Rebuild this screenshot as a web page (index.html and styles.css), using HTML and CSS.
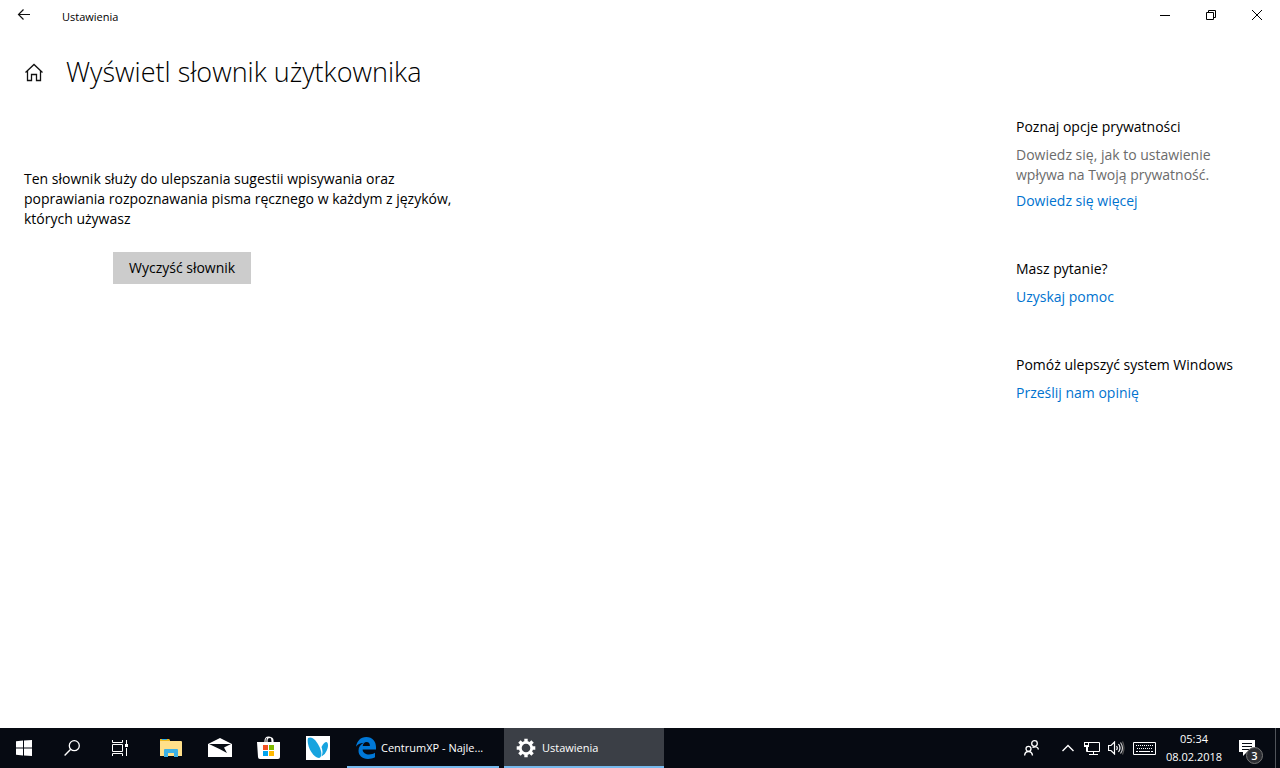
FILE: index.html
```html
<!DOCTYPE html>
<html lang="pl">
<head>
<meta charset="utf-8">
<title>Ustawienia</title>
<link rel="stylesheet" href="styles.css">
</head>
<body>
<div class="window">
  <header class="titlebar">
    <button class="back" aria-label="Wstecz"><svg width="14" height="12" viewBox="0 0 14 12"><path d="M13 5.500H1.500M6.500 .5l-5 5 5 5" fill="none" stroke="#111" stroke-width="1.200"/></svg></button>
    <span class="app-name">Ustawienia</span>
    <div class="controls">
      <button aria-label="Minimalizuj"><svg width="10" height="10" viewBox="0 0 10 10"><path d="M0 5.500h10" stroke="#000"/></svg></button>
      <button aria-label="Przywróć"><svg width="10" height="10" viewBox="0 0 10 10"><path d="M.5 2.500h7v7h-7zM2.500 2.500v-2h7v7h-2" fill="none" stroke="#000"/></svg></button>
      <button aria-label="Zamknij"><svg width="10" height="10" viewBox="0 0 10 10"><path d="M0 0l10 10M10 0L0 10" stroke="#000"/></svg></button>
    </div>
  </header>
  <div class="page-head">
    <a class="home" href="#home" aria-label="Strona główna"><svg width="20" height="20" viewBox="0 0 20 20"><path d="M1.500 10.500 10 2.500l8.500 8M3.500 9v9.500h4v-6h5v6h4V9" fill="none" stroke="#111" stroke-width="1.300"/></svg></a>
    <h1>Wyświetl słownik użytkownika</h1>
  </div>
  <div class="content">
    <main class="main">
      <p>Ten słownik służy do ulepszania sugestii wpisywania oraz poprawiania rozpoznawania pisma ręcznego w każdym z języków, których używasz</p>
      <button class="clear">Wyczyść słownik</button>
    </main>
    <aside class="side">
      <section>
        <h2>Poznaj opcje prywatności</h2>
        <p>Dowiedz się, jak to ustawienie wpływa na Twoją prywatność.</p>
        <a href="#privacy">Dowiedz się więcej</a>
      </section>
      <section>
        <h2>Masz pytanie?</h2>
        <a href="#help">Uzyskaj pomoc</a>
      </section>
      <section>
        <h2>Pomóż ulepszyć system Windows</h2>
        <a href="#feedback">Prześlij nam opinię</a>
      </section>
    </aside>
  </div>
</div>
<footer class="taskbar">
  <button class="launch" aria-label="Start"><svg width="16" height="16" viewBox="0 0 16 16"><path d="M0 1.300 7 .6V7.500H0zM8 .5 16 0v7.500H8zM0 8.500h7v7L0 14.700zM8 8.500h8V16l-8-.5z" fill="#fff"/></svg></button>
  <button class="launch" aria-label="Szukaj"><svg width="16" height="16" viewBox="0 0 16 16"><circle cx="10.300" cy="5.700" r="5" fill="none" stroke="#fff" stroke-width="1.300"/><path d="M6.700 9.300.6 15.400" stroke="#fff" stroke-width="1.400"/></svg></button>
  <button class="launch" aria-label="Widok zadań"><svg width="16" height="16" viewBox="0 0 16 16"><path d="M.5 0v2.500h10V0M.5 16v-2.500h10V16M.5 4.500h10v7H.5zM14.500 0v4M14.500 8v8" fill="none" stroke="#fff"/><path d="M13 4h3v3h-3z" fill="#fff"/></svg></button>
  <button class="launch wide" aria-label="Eksplorator plików"><svg width="22" height="20" viewBox="0 0 22 20"><path d="M0 2q0-1 1-1h8l1 2h11q1 0 1 1v14H0z" fill="#ffe08a"/><path d="M0 2q0-1 1-1h8l1 2H0z" fill="#edb91d"/><path d="M2 1h5v1H2z" fill="#35aee6"/><path d="M4 19v-7q0-1 1-1h12q1 0 1 1v7h-4v-4H8v4z" fill="#3db1e5"/></svg></button>
  <button class="launch wide" aria-label="Poczta"><svg width="24" height="20" viewBox="0 0 24 20"><path d="M0 6 12 0l12 6v13H0z" fill="#fff"/><path d="M1 6h22l-7 3.500 3 5.500-7.500-4z" fill="#080d14"/></svg></button>
  <button class="launch wide" aria-label="Sklep"><svg width="24" height="24" viewBox="0 0 24 24"><path d="M8 7V5q0-4 3.500-4T15 5v2M10 7V4q0-2.500 3-2.500t3 3V7" fill="none" stroke="#fff" stroke-width="1.100"/><path d="M0 6h23v15q0 2-2 2H3q-2 0-2-2z" fill="#fff"/><path d="M6 9h5v5H6z" fill="#f25022"/><path d="M12 9h5v5h-5z" fill="#7fba00"/><path d="M6 15h5v5H6z" fill="#00a4ef"/><path d="M12 15h5v5h-5z" fill="#ffb900"/></svg></button>
  <button class="launch wide" aria-label="Motyl"><svg width="24" height="24" viewBox="0 0 24 24"><path d="M0 0h24v24H0z" fill="#fff"/><path d="M2 2C6-.5 11 5 14 12c2 5 2 9-1 10C7 22 0 9 2 2z" fill="#18a4df"/><path d="M15.500 20.500q3.500-1.500 5-5.500c2-4 2-8 0-9q-2.500 0-5 5 2 5 0 9.500z" fill="#18a4df"/></svg></button>
  <button class="task"><svg width="20" height="22" viewBox="0 0 20 22"><path d="M0 9.800C1 4 4.500 0 10.300 0 16.500 0 20 4.500 20 10v2.500H6.600c.2 3.500 3.200 5 6.400 5 2.300 0 4.500-.6 6-1.700v4.500C17 21.400 14.500 22 12 22c-6 0-9.500-3.700-9.500-8.200 0-3.800 2-6.400 5.200-8C3.800 6 1.500 7.500 0 9.800zM6.700 9h7.200c0-2.300-1-3.900-3.400-3.900C8.300 5.100 7 7 6.700 9z" fill="#0078d7"/></svg><span>CentrumXP - Najle...</span></button>
  <button class="task active"><svg width="20" height="20" viewBox="0 0 20 20"><g transform="translate(10 10)" fill="none" stroke="#fff"><circle r="5.700" stroke-width="2.800"/><g stroke-width="3.400"><path d="M0-6v-3.300M0 6v3.300M-6 0h-3.300M6 0h3.300"/><path d="M0-6v-3.300M0 6v3.300M-6 0h-3.300M6 0h3.300" transform="rotate(45)"/></g></g></svg><span>Ustawienia</span></button>
  <div class="tray">
    <button aria-label="Kontakty" class="people"><svg width="16" height="16" viewBox="0 0 16 16"><g fill="none" stroke="#fff" stroke-width="1.300"><circle cx="10.500" cy="3.500" r="2.800"/><path d="M8.500 7.500q5-2 6 2"/><circle cx="4.500" cy="8.800" r="2.500"/><path d="M.6 15.500q.4-4 3.900-4t4 4"/></g></svg></button>
    <button aria-label="Pokaż ukryte ikony"><svg width="14" height="8" viewBox="0 0 14 8"><path d="M1.500 7 7 1.500 12.500 7" fill="none" stroke="#fff" stroke-width="1.400"/></svg></button>
    <button aria-label="Sieć"><svg width="17" height="15" viewBox="0 0 17 15"><path d="M3.500 1.500h12v9h-12zM9.500 10.500v3M5 13.500h9M2.500 5v5.500h2" fill="none" stroke="#fff"/><path d="M0 1h5v5H0z" fill="#fff"/><path d="M1 2h3v2H1z" fill="#080d14"/></svg></button>
    <button aria-label="Głośność"><svg width="17" height="14" viewBox="0 0 17 14"><g fill="none" stroke="#fff" stroke-width="1.200"><path d="M.5 4.500h2.500l3.500-3.500v12L3 9.500H.5zM8.500 5q1.500 2 0 4M10.500 3q3 4 0 8"/><path d="M12.500 1.500q4 5.500 0 11" stroke="#ccc"/><path d="M14.500 .5q3 6 0 13" stroke="#555"/></g></svg></button>
    <button aria-label="Klawiatura" class="keyboard"><svg width="23" height="13" viewBox="0 0 23 13"><path d="M.5.5h22v12H.5z" fill="none" stroke="#fff"/><path d="M3 3.500h17M4 6.500h16" stroke="#fff" stroke-dasharray="1 1"/><path d="M3 9.500h2M6 9.500h11M18 9.500h2" stroke="#fff"/></svg></button>
    <div class="clock"><span>05:34</span><span>08.02.2018</span></div>
    <button class="notes" aria-label="Powiadomienia"><svg width="16" height="16" viewBox="0 0 16 16"><path d="M0 0h16v12H8l-4 4v-4H0z" fill="#fff"/><path d="M3 3.500h10M3 6.500h10M3 9.500h7" stroke="#080d14"/></svg><span class="badge">3</span></button>
    <div class="desktop-edge"></div>
  </div>
</footer>
</body>
</html>
```
FILE: styles.css
```css
* { box-sizing: border-box; }
body {
  margin: 0;
  min-height: 100vh;
  display: flex;
  flex-direction: column;
  background: #fff;
  color: #000;
  font: 14px/20px "Segoe UI", "Open Sans", "Noto Sans", sans-serif;
}
button {
  border: 0;
  padding: 0;
  background: none;
  color: inherit;
  font: inherit;
}
svg { display: block; flex: none; }
h1, h2, p { margin: 0; font-weight: 400; }
a { color: #0073cf; text-decoration: none; }

.window { flex: 1; }
.titlebar { display: flex; align-items: center; height: 33px; font-size: 11px; }
.back { display: grid; place-items: center; width: 48px; height: 30px; align-self: flex-start; }
.app-name { padding-left: 14px; }
.controls { display: flex; align-self: flex-start; margin-left: auto; }
.controls button { display: grid; place-items: center; width: 46px; height: 30px; }

.page-head { display: flex; align-items: center; gap: 22px; padding: 19px 24px 0; }
.home { display: block; }
h1 { font-size: 27px; font-weight: 300; line-height: 40px; }

.content { display: flex; justify-content: space-between; padding: 25px 24px 0; }
.main { width: 440px; padding-top: 52px; }
.clear {
  display: block;
  height: 32px;
  margin: 23px 0 0 89px;
  padding: 0 16px;
  background: #ccc;
}
.side { display: grid; gap: 48px; align-content: start; width: 240px; }
.side h2 { font-size: 14px; line-height: 20px; margin-bottom: 8px; }
.side p { color: #6b6b6b; margin-bottom: 6px; padding-right: 20px; }
.side a { display: block; }

.taskbar {
  display: flex;
  height: 40px;
  background: #060a12;
  color: #fff;
  font-size: 11px;
  line-height: 18px;
}
.launch { display: grid; place-items: center; width: 48px; }
.launch.wide { width: 49px; }
.wide:nth-child(4) { margin-left: 2px; }
.task {
  display: flex;
  align-items: center;
  gap: 5px;
  width: 152px;
  margin-left: 5px;
  padding: 2px 0 0 9px;
  border-bottom: 2px solid #76b9ed;
  white-space: nowrap;
}
.task.active { width: 160px; padding-left: 12px; gap: 6px; background: #3b3f46; }
.tray { display: flex; align-items: center; margin-left: auto; }
.tray button { display: grid; place-items: center; width: 24px; height: 40px; }
.tray .people { width: 48px; }
.tray .keyboard { width: 32px; }
.clock { display: grid; width: 68px; text-align: center; }
.tray .notes { position: relative; width: 38px; }
.badge {
  position: absolute;
  left: 18px;
  top: 19px;
  width: 17px;
  height: 17px;
  border: 1px solid #777;
  border-radius: 50%;
  background: #2c2e33;
  font-weight: 600;
  line-height: 15px;
}
.desktop-edge { width: 5px; height: 40px; margin-left: 9px; border-left: 1px solid #50545a; }
```
